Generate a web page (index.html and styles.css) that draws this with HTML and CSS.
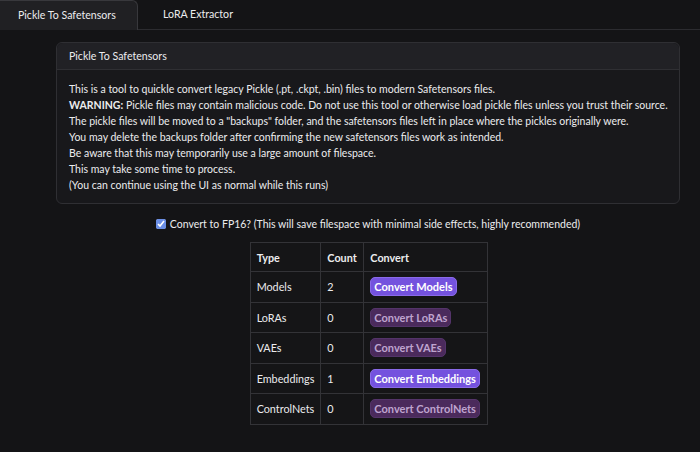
FILE: index.html
```html
<!DOCTYPE html>
<html>
	<head>
		<meta charset="utf-8">
		<title>Safetensors</title>
		<link rel="stylesheet" href="styles.css">
	</head>
	<body>
		<div class="tabs">
			<div class="tab active">Pickle To Safetensors</div>
			<div class="tab">LoRA Extractor</div>
			<div class="tab-rest"></div>
		</div>
		<div class="content">
			<div class="card">
				<div class="card-header">Pickle To Safetensors</div>
				<div class="card-body">
					This is a tool to quickle convert legacy Pickle (.pt, .ckpt, .bin) files to modern Safetensors files.<br>
					<b>WARNING:</b> Pickle files may contain malicious code. Do not use this tool or otherwise load pickle files unless you trust their source.<br>
					The pickle files will be moved to a "backups" folder, and the safetensors files left in place where the pickles originally were.<br>
					You may delete the backups folder after confirming the new safetensors files work as intended.<br>
					Be aware that this may temporarily use a large amount of filespace.<br>
					This may take some time to process.<br>
					(You can continue using the UI as normal while this runs)
				</div>
			</div>
			<label class="fp16">
				<input type="checkbox" checked>
				Convert to FP16? (This will save filespace with minimal side effects, highly recommended)
			</label>
			<table class="models">
				<tr><th class="c-type">Type</th><th class="c-count">Count</th><th class="c-conv">Convert</th></tr>
				<tr><td>Models</td><td>2</td><td><button class="btn">Convert Models</button></td></tr>
				<tr><td>LoRAs</td><td>0</td><td><button class="btn off">Convert LoRAs</button></td></tr>
				<tr><td>VAEs</td><td>0</td><td><button class="btn off">Convert VAEs</button></td></tr>
				<tr><td>Embeddings</td><td>1</td><td><button class="btn">Convert Embeddings</button></td></tr>
				<tr><td>ControlNets</td><td>0</td><td><button class="btn off">Convert ControlNets</button></td></tr>
			</table>
		</div>
	</body>
</html>
```
FILE: styles.css
```css
body {
	margin: 0px;
	background-color: #141416;
	color: #ececee;
	font-family: Lato, "Noto Sans", sans-serif;
	font-size: 10.5px;
}
.tabs {
	display: flex;
	height: 30px;
	white-space: nowrap;
}
.tab {
	box-sizing: border-box;
	padding: 0px 18px;
	line-height: 29px;
	font-size: 10.6px;
	border-bottom: solid 1px #2c2c30;
}
.tab.active {
	width: 138px;
	background-color: #202023;
	border: solid 1px #38383c;
	border-left: none;
	border-bottom: none;
	border-radius: 0px 6px 0px 0px;
}
.tab + .tab {
	padding-left: 25px;
	width: 110px;
}
.tab-rest {
	flex: 1;
	border-bottom: solid 1px #2c2c30;
}
.content {
	display: flex;
	flex-direction: column;
	align-items: center;
	padding-top: 12px;
}
.card {
	margin-left: 36px;
	width: 622px;
	border: solid 1px #2f2f33;
	border-radius: 6px;
	background-color: #18181b;
}
.card-header {
	background-color: #212125;
	border-bottom: solid 1px #2f2f33;
	border-radius: 6px 6px 0px 0px;
	padding: 0px 12px;
	height: 26px;
	line-height: 27px;
	font-size: 10.6px;
}
.card-body {
	padding: 11px 12px 10px 12px;
	line-height: 16px;
	white-space: nowrap;
}
.fp16 {
	display: flex;
	align-items: center;
	margin: 10px 0px 0px 36px;
	line-height: 20px;
	white-space: nowrap;
}
.fp16 input {
	margin: 0px 4px 0px 0px;
	width: 10px;
	height: 10px;
	accent-color: #6a8ee6;
}
.models {
	margin-top: 8px;
	margin-left: 38px;
	border-collapse: collapse;
	background-color: #151517;
	white-space: nowrap;
}
.models th, .models td {
	box-sizing: border-box;
	border: solid 1px #333337;
	text-align: left;
	padding: 0px 6px;
	height: 30.5px;
	font-size: 10.8px;
}
.models th {
	height: 29px;
}
.c-type {
	width: 69px;
}
.c-count {
	width: 43px;
}
.c-conv {
	width: 124px;
}
.btn {
	font-family: inherit;
	font-size: 11px;
	font-weight: bold;
	color: #ffffff;
	background-color: #7452de;
	border: solid 1px #8a6ae8;
	border-radius: 5px;
	padding: 0px 3px;
	height: 19px;
	line-height: 17px;
}
.btn.off {
	color: #bfa4cf;
	background-color: #4b2a5c;
	border-color: #54346a;
}
```
